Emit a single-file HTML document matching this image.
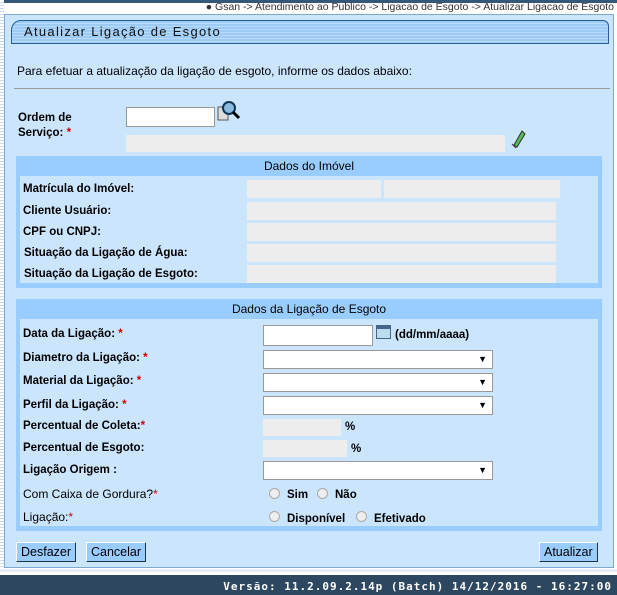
<!DOCTYPE html><html><head><meta charset="utf-8"><style>
*{margin:0;padding:0;box-sizing:border-box}
body{width:617px;height:595px;position:relative;background:#fff;font-family:"Liberation Sans",Arial,sans-serif;font-size:12px;color:#000;overflow:hidden}
.a{position:absolute}
.b{font-weight:bold;font-size:11.5px}
.r{color:#c00}
.g{position:absolute;background:#ededed}
.in{position:absolute;background:#fff;border:1px solid #999}
.sel{position:absolute;background:#fff;border:1px solid #999;height:19px;width:230px;left:263px}
.sel:after{content:"▼";position:absolute;right:5px;top:3px;font-size:9px}
.rad{position:absolute;width:11px;height:11px;border-radius:50%;border:1px solid #aaa;background:#eee}
.btn{position:absolute;top:542px;height:20px;background:#99ccff;border:1px solid #335;border-color:#fff #234 #234 #fff;font-size:12.5px;padding:2px 4px}
.hd{position:absolute;left:0;right:0;top:0;height:20px;background:#99ccff;text-align:center;font-size:12px;line-height:20px}
</style></head><body>
<div class="a" style="left:0;top:0;width:617px;height:3px;background:#35577a"></div>
<div class="a" style="left:0;top:0;width:4px;height:570px;background:repeating-linear-gradient(#fff 0 2px,#c9dcef 2px 3px)"></div>
<div class="a" style="right:3px;top:1px;font-size:10.5px;color:#333">● Gsan -&gt; Atendimento ao Publico -&gt; Ligacao de Esgoto -&gt; Atualizar Ligacao de Esgoto</div>
<div class="a" style="left:4px;top:14px;width:610px;height:554px;background:#cbe5fd;border:1px solid #7fa8d0"></div>
<div class="a" style="left:11px;top:20px;width:598px;height:24px;border:1px solid #2a5d93;border-radius:10px 6px 0 0;background:repeating-linear-gradient(#9ccbf6 0 2px,#b9dafa 2px 3px);font-size:13px;letter-spacing:1.3px;padding:3px 0 0 12px;color:#111">Atualizar Ligação de Esgoto</div>
<div class="a" style="left:17px;top:64px">Para efetuar a atualização da ligação de esgoto, informe os dados abaixo:</div>
<div class="a" style="left:14px;top:88px;width:596px;height:1px;background:#999"></div>
<div class="a b" style="left:18px;top:111px;line-height:15px">Ordem de<br>Serviço: <span class="r">*</span></div>
<div class="in" style="left:126px;top:107px;width:89px;height:20px"></div>
<svg class="a" style="left:217px;top:100px" width="24" height="22"><rect x="1" y="7" width="10" height="13" fill="#ddd" stroke="#555"/><circle cx="12" cy="8" r="6" fill="#8bd" stroke="#135" stroke-width="2"/><path d="M16 12l6 6" stroke="#000" stroke-width="3"/></svg>
<div class="g" style="left:126px;top:135px;width:379px;height:17px"></div>
<svg class="a" style="left:510px;top:127px" width="16" height="22"><path d="M4 18l8-14 3 3-8 13z" fill="#5b5" stroke="#333"/><path d="M2 17l4 4" stroke="#333"/></svg>

<div class="a" style="left:16px;top:156px;width:586px;height:132px;background:#99ccff">
<div class="hd">Dados do Imóvel</div>
<div class="a" style="left:4px;top:20px;width:578px;height:107px;background:#cbe5fd"></div>
<div class="a b" style="left:7px;top:27px">Matrícula do Imóvel:</div>
<div class="g" style="left:231px;top:24px;width:134px;height:18px"></div>
<div class="g" style="left:368px;top:24px;width:176px;height:18px"></div>
<div class="a b" style="left:7px;top:49px">Cliente Usuário:</div>
<div class="g" style="left:231px;top:46px;width:309px;height:18px"></div>
<div class="a b" style="left:7px;top:70px">CPF ou CNPJ:</div>
<div class="g" style="left:231px;top:67px;width:309px;height:18px"></div>
<div class="a b" style="left:8px;top:91px">Situação da Ligação de Água:</div>
<div class="g" style="left:231px;top:88px;width:309px;height:18px"></div>
<div class="a b" style="left:8px;top:112px">Situação da Ligação de Esgoto:</div>
<div class="g" style="left:231px;top:109px;width:309px;height:18px"></div>
</div>

<div class="a" style="left:16px;top:299px;width:586px;height:232px;background:#99ccff">
<div class="hd">Dados da Ligação de Esgoto</div>
<div class="a" style="left:4px;top:20px;width:578px;height:207px;background:#cbe5fd"></div>
</div>
<div class="a b" style="left:23px;top:328px">Data da Ligação: <span class="r">*</span></div>
<div class="in" style="left:263px;top:325px;width:110px;height:21px"></div>
<svg class="a" style="left:376px;top:325px" width="15" height="14"><rect x="0.5" y="0.5" width="14" height="13" fill="#bde" stroke="#468"/><rect x="1" y="1" width="13" height="3" fill="#468"/></svg>
<div class="a b" style="left:395px;top:329px">(dd/mm/aaaa)</div>
<div class="a b" style="left:23px;top:352px">Diametro da Ligação: <span class="r">*</span></div>
<div class="sel" style="top:350px"></div>
<div class="a b" style="left:23px;top:375px">Material da Ligação: <span class="r">*</span></div>
<div class="sel" style="top:373px"></div>
<div class="a b" style="left:23px;top:399px">Perfil da Ligação: <span class="r">*</span></div>
<div class="sel" style="top:396px"></div>
<div class="a b" style="left:23px;top:420px">Percentual de Coleta:<span class="r">*</span></div>
<div class="g" style="left:263px;top:419px;width:78px;height:17px"></div>
<div class="a b" style="left:345px;top:421px">%</div>
<div class="a b" style="left:23px;top:442px">Percentual de Esgoto:</div>
<div class="g" style="left:263px;top:440px;width:84px;height:17px"></div>
<div class="a b" style="left:351px;top:443px">%</div>
<div class="a b" style="left:23px;top:464px">Ligação Origem :</div>
<div class="sel" style="top:461px"></div>
<div class="a" style="left:23px;top:487px">Com Caixa de Gordura?<span class="r">*</span></div>
<div class="rad" style="left:269px;top:488px"></div><div class="a b" style="left:287px;top:489px">Sim</div>
<div class="rad" style="left:317px;top:488px"></div><div class="a b" style="left:335px;top:489px">Não</div>
<div class="a" style="left:23px;top:510px">Ligação:<span class="r">*</span></div>
<div class="rad" style="left:269px;top:511px"></div><div class="a b" style="left:287px;top:513px">Disponível</div>
<div class="rad" style="left:356px;top:511px"></div><div class="a b" style="left:374px;top:513px">Efetivado</div>

<div class="btn" style="left:16px">Desfazer</div>
<div class="btn" style="left:86px">Cancelar</div>
<div class="btn" style="left:539px">Atualizar</div>

<div class="a" style="left:0;top:569px;width:617px;height:3px;background:#e8eef4"></div>
<div class="a" style="left:0;top:575px;width:617px;height:20px;background:#2e4760;color:#fff;font-weight:bold;font-size:11px;letter-spacing:1px;text-align:right;padding:5px 5px 0 0;font-family:'DejaVu Sans Mono',monospace">Versão: 11.2.09.2.14p (Batch) 14/12/2016 - 16:27:00</div>
</body></html>
